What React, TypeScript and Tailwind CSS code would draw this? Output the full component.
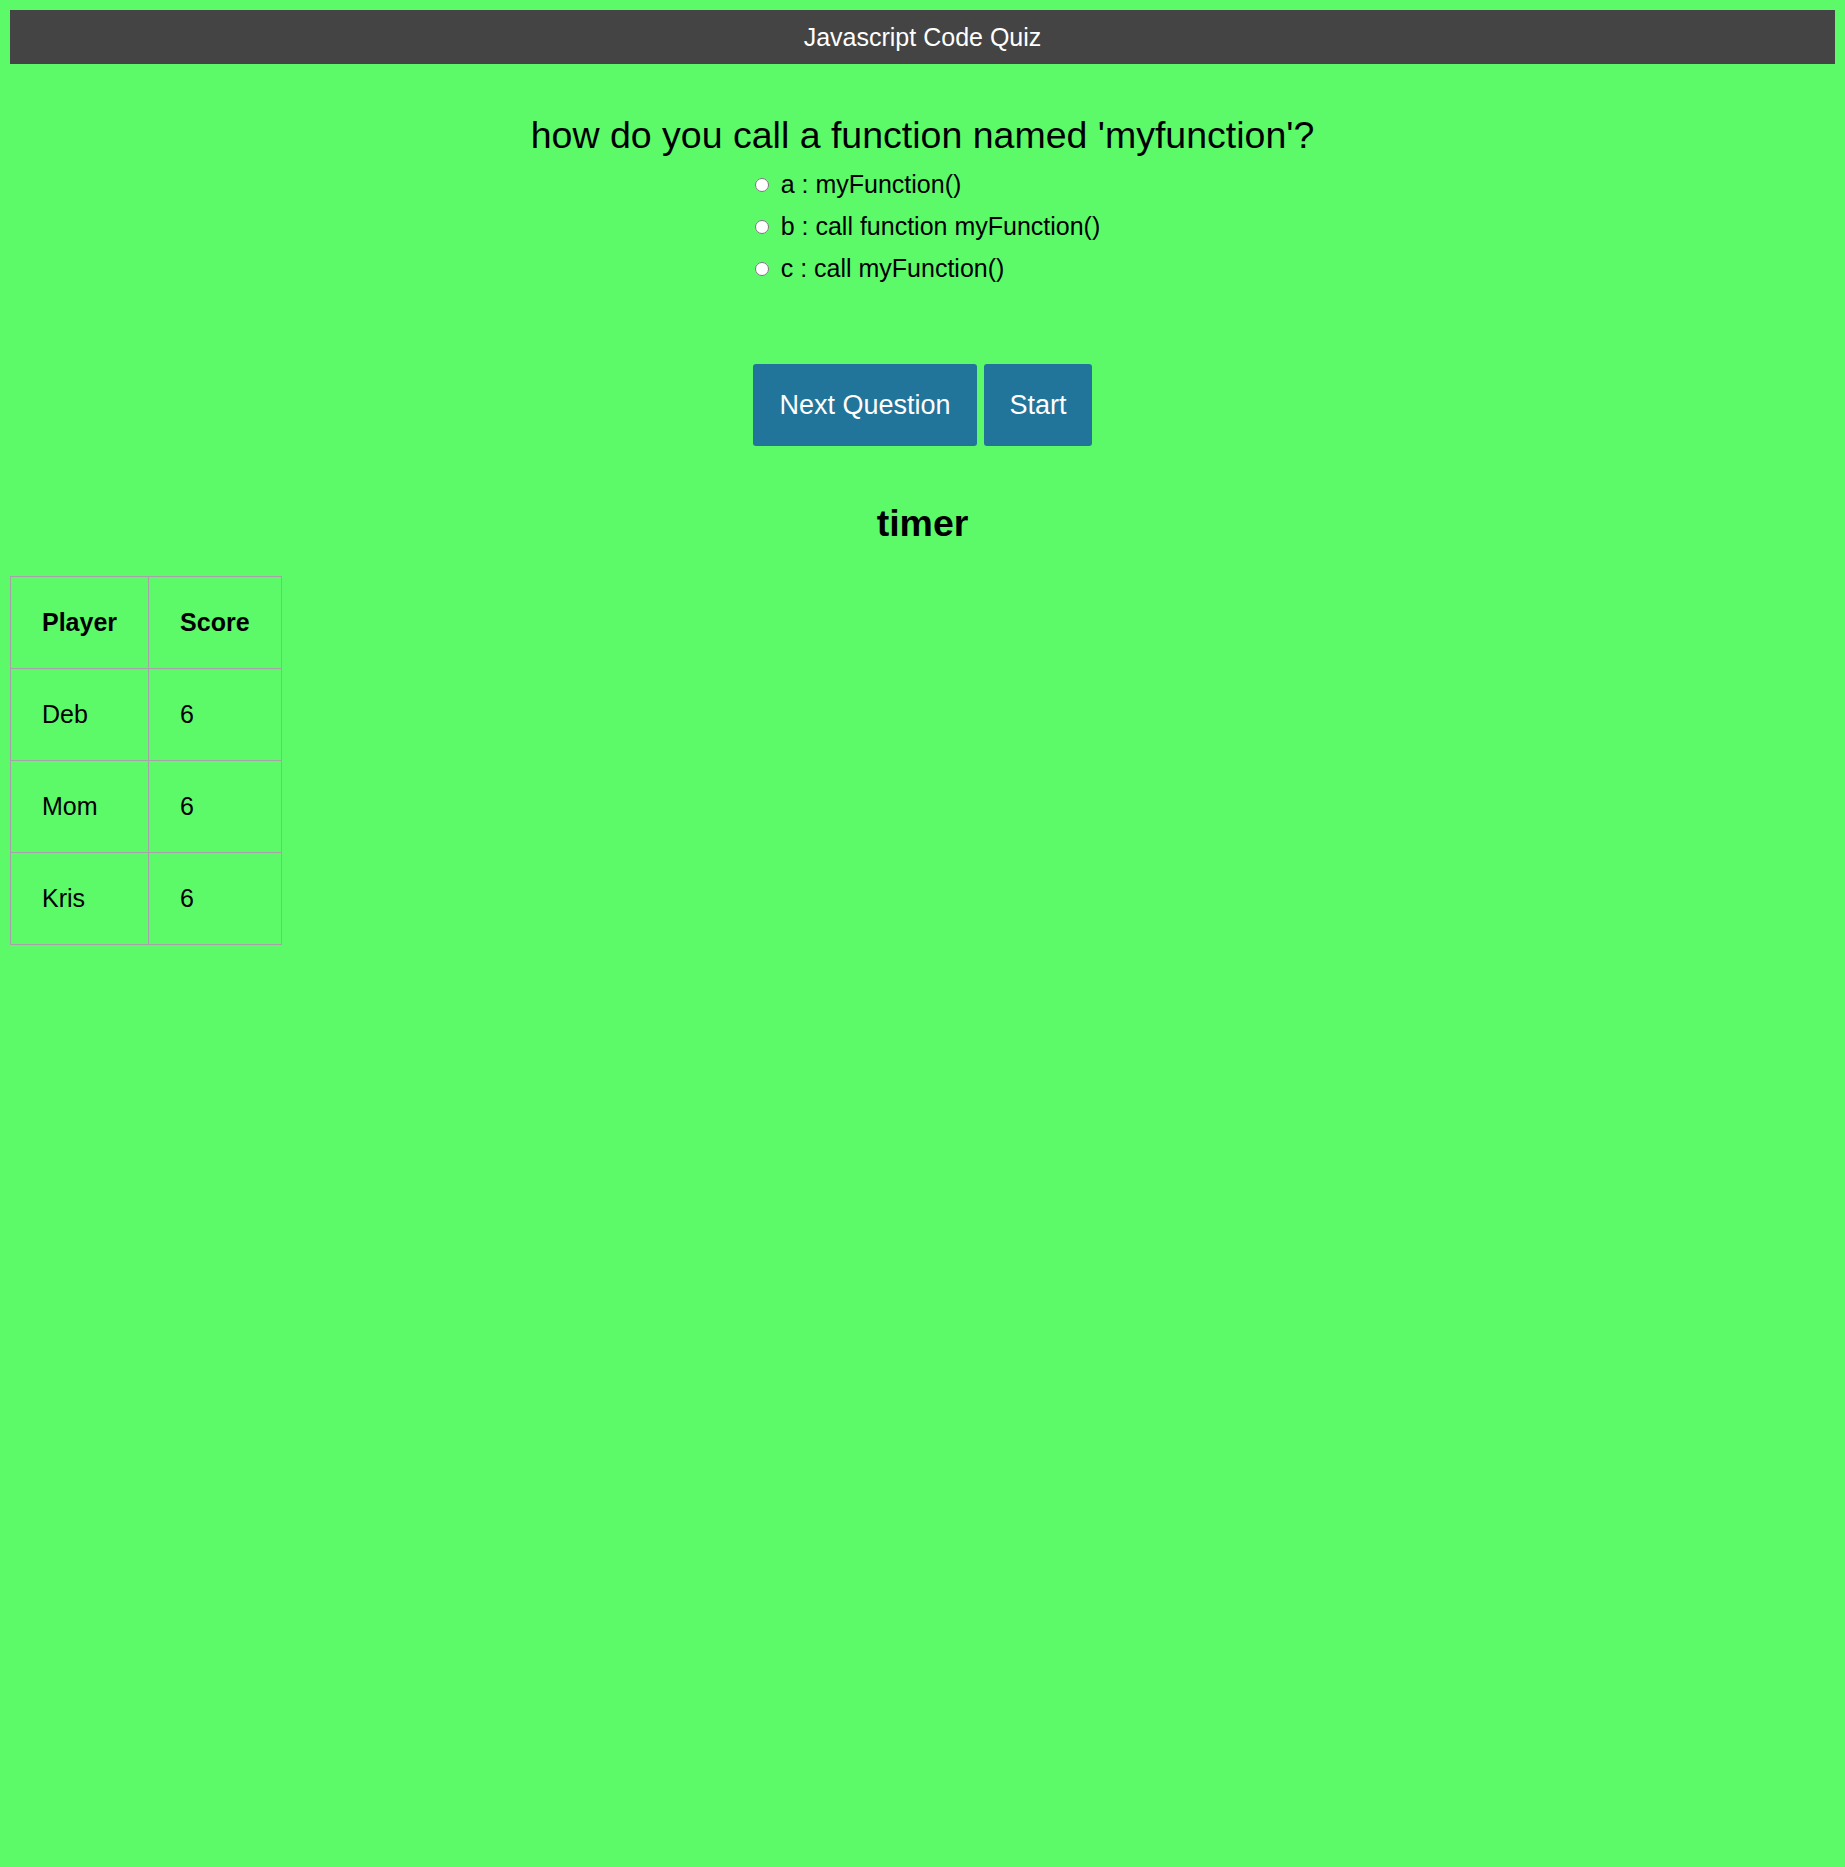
import React from 'react';

const options = [
  { id: 'a', label: 'a : myFunction()' },
  { id: 'b', label: 'b : call function myFunction()' },
  { id: 'c', label: 'c : call myFunction()' },
];

const scores = [
  { name: 'Deb', score: 6 },
  { name: 'Mom', score: 6 },
  { name: 'Kris', score: 6 },
];

const App = () => {
  return (
    <div className="min-h-[1867px] bg-[#5cfa69] p-[10px] font-['Liberation_Sans',Arial,sans-serif] text-black">
      <header className="h-[54px] pt-[2px] bg-[#444444] flex items-center justify-center text-white text-[25px]">
        Javascript Code Quiz
      </header>

      <main className="flex flex-col items-center">
        <h2 className="mt-[49px] text-[37.5px] leading-[44px]">
          how do you call a function named 'myfunction'?
        </h2>

        <div className="mt-[7px] flex flex-col items-start">
          {options.map((opt) => (
            <label key={opt.id} className="h-[42px] flex items-center text-[25px]">
              <input
                type="radio"
                name="answer"
                value={opt.id}
                className="w-[14px] h-[14px] m-0 ml-[10px] mr-[12px]"
              />
              {opt.label}
            </label>
          ))}
        </div>

        <div className="mt-[74px] flex gap-[7px]">
          <button
            type="button"
            className="w-[224px] h-[82px] bg-[#21759b] rounded-[3px] text-white text-[27px]"
          >
            Next Question
          </button>
          <button
            type="button"
            className="w-[108px] h-[82px] bg-[#21759b] rounded-[3px] text-white text-[27px]"
          >
            Start
          </button>
        </div>

        <h2 className="mt-[56px] text-[37.5px] leading-[43px] font-bold">timer</h2>
      </main>

      <table className="mt-[31px] border-collapse text-[25px] leading-[29px]">
        <thead>
          <tr>
            <th className="border border-[#aaa0aa] px-[31px] py-[31px] text-left font-bold">Player</th>
            <th className="border border-[#aaa0aa] px-[31px] py-[31px] text-left font-bold">Score</th>
          </tr>
        </thead>
        <tbody>
          {scores.map((row) => (
            <tr key={row.name}>
              <td className="border border-[#aaa0aa] px-[31px] py-[31px]">{row.name}</td>
              <td className="border border-[#aaa0aa] px-[31px] py-[31px]">{row.score}</td>
            </tr>
          ))}
        </tbody>
      </table>
    </div>
  );
};

export default App;
